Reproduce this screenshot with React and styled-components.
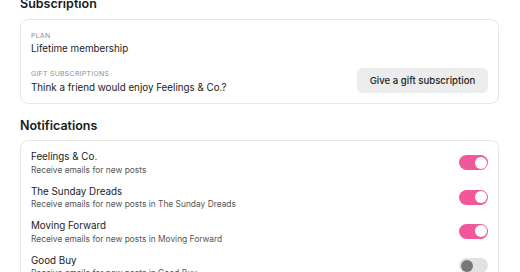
import styled, { createGlobalStyle } from "styled-components";

const Global = createGlobalStyle`
  body {
    margin: 0;
    background: #fff;
    font-family: Inter, "Liberation Sans", sans-serif;
    color: #1f1f1f;
    overflow: hidden;
  }
`;

const Page = styled.div`
  padding: 0 21px 0 20px;
  margin-top: -3.6px;
`;

const Heading = styled.h2`
  margin: 0 0 6.4px;
  font-size: 12.5px;
  font-weight: 600;
  line-height: 16px;
  color: #1a1a1a;
`;

const Card = styled.div`
  border: 1px solid #e6e6e6;
  border-radius: 8px;
  padding: ${(p) => p.$pad};
  margin-bottom: ${(p) => p.$gap || "0"};
`;

const Field = styled.div`
  display: flex;
  align-items: flex-end;
  justify-content: space-between;
  & + & {
    margin-top: 12.3px;
  }
`;

const Label = styled.div`
  font-size: 6.8px;
  letter-spacing: 0.35px;
  color: #8a8a8a;
  text-transform: uppercase;
  line-height: 9px;
  margin-bottom: 3.5px;
`;

const Value = styled.div`
  font-size: 9.8px;
  line-height: 12px;
  color: #222;
`;

const GiftButton = styled.button`
  border: none;
  background: #ececec;
  border-radius: 6px;
  height: 25px;
  width: 131px;
  padding: 0;
  font-family: inherit;
  font-size: 9.6px;
  font-weight: 500;
  color: #222;
  margin-bottom: 1px;
`;

const Row = styled.div`
  display: flex;
  align-items: center;
  justify-content: space-between;
  height: 34.4px;
`;

const RowTitle = styled.div`
  font-size: 9.8px;
  line-height: 12px;
  color: #222;
`;

const RowSub = styled.div`
  font-size: 8.4px;
  line-height: 11px;
  color: #555;
  margin-top: 1.4px;
`;

const Toggle = styled.div`
  width: 29px;
  height: 15px;
  border-radius: 8px;
  background: ${(p) => (p.$on ? "#f2579b" : "#e2e2e2")};
  position: relative;
  flex: none;
  margin-bottom: 2px;
  &::after {
    content: "";
    position: absolute;
    top: 1.5px;
    ${(p) => (p.$on ? "right: 1.5px;" : "left: 1.5px;")}
    width: 12px;
    height: 12px;
    border-radius: 50%;
    background: ${(p) => (p.$on ? "#fff" : "#777")};
  }
`;

const rows = [
  ["Feelings & Co.", "Receive emails for new posts", true],
  ["The Sunday Dreads", "Receive emails for new posts in The Sunday Dreads", true],
  ["Moving Forward", "Receive emails for new posts in Moving Forward", true],
  ["Good Buy", "Receive emails for new posts in Good Buy", false],
];

export default function App() {
  return (
    <Page>
      <Global />
      <Heading>Subscription</Heading>
      <Card $pad="11px 10px 9.5px 10px" $gap="14px">
        <Field>
          <div>
            <Label>Plan</Label>
            <Value>Lifetime membership</Value>
          </div>
        </Field>
        <Field>
          <div>
            <Label>Gift subscriptions</Label>
            <Value>Think a friend would enjoy Feelings &amp; Co.?</Value>
          </div>
          <GiftButton>Give a gift subscription</GiftButton>
        </Field>
      </Card>
      <Heading>Notifications</Heading>
      <Card $pad="5px 10px 0 10px">
        {rows.map(([t, s, on]) => (
          <Row key={t}>
            <div>
              <RowTitle>{t}</RowTitle>
              <RowSub>{s}</RowSub>
            </div>
            <Toggle $on={on} />
          </Row>
        ))}
      </Card>
    </Page>
  );
}
